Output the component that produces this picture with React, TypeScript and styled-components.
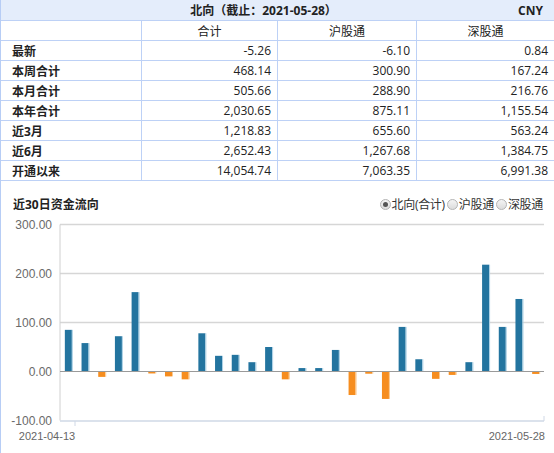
import React from "react";
import styled, { createGlobalStyle } from "styled-components";

const GlobalStyle = createGlobalStyle`
  html, body { margin: 0; padding: 0; background: #fff; }
  body { font-family: "Open Sans", "Noto Sans CJK SC", sans-serif; color: #333; }
`;

const Wrapper = styled.div`
  width: 554px;
  height: 453px;
  box-sizing: border-box;
  border-left: 1px solid #b7cdf5;
  overflow: hidden;
  background: #fff;
`;

const TitleRow = styled.div`
  display: grid;
  grid-template-columns: 1fr auto;
  align-items: center;
  height: 21px;
  box-sizing: border-box;
  background: #e4edfb;
  border-bottom: 1px solid #bdd1f6;
  padding: 0 11px 0 8px;
  font-size: 12px;
  font-weight: 700;
  color: #222;
`;

const TitleText = styled.span`
  text-align: center;
`;

const Row = styled.div`
  display: grid;
  grid-template-columns: 141px 136px 139px 1fr;
  height: 20px;
  box-sizing: border-box;
  border-bottom: 1px solid #bdd1f6;
`;

const Cell = styled.div<{ $align: "left" | "right" | "center"; $bold?: boolean; $last?: boolean }>`
  display: flex;
  align-items: center;
  justify-content: ${(p) => (p.$align === "left" ? "flex-start" : p.$align === "right" ? "flex-end" : "center")};
  padding: ${(p) => (p.$align === "left" ? "0 0 0 11px" : p.$align === "right" ? "0 6px 0 0" : "0")};
  border-right: ${(p) => (p.$last ? "none" : "1px solid #bdd1f6")};
  font-size: 12px;
  font-weight: ${(p) => (p.$bold ? 700 : 400)};
  color: #222;
  white-space: nowrap;
`;

const ChartSection = styled.section`
  display: flex;
  flex-direction: column;
`;

const ChartHeader = styled.div`
  display: flex;
  align-items: center;
  justify-content: space-between;
  height: 16px;
  padding: 15px 11px 1px 12px;
`;

const ChartTitle = styled.span`
  font-size: 12px;
  font-weight: 700;
  color: #222;
`;

const RadioGroup = styled.div`
  display: flex;
  align-items: center;
`;

const RadioLabel = styled.label`
  display: flex;
  align-items: center;
  font-size: 12px;
  color: #333;
  letter-spacing: -0.3px;
`;

const RadioDot = styled.span<{ $checked?: boolean }>`
  position: relative;
  width: 11px;
  height: 11px;
  box-sizing: border-box;
  border-radius: 50%;
  border: 1px solid #b4b4b4;
  background: linear-gradient(#f4f4f4, #dcdcdc);
  margin: 0 1px 0 2px;
  &::after {
    content: "";
    display: ${(p) => (p.$checked ? "block" : "none")};
    position: absolute;
    left: 2px;
    top: 2px;
    width: 5px;
    height: 5px;
    border-radius: 50%;
    background: #555;
  }
`;

const ChartSvg = styled.svg`
  display: block;
  font-family: "Liberation Sans", "Open Sans", sans-serif;
`;

const columns = ["合计", "沪股通", "深股通"];
const rows: [string, string, string, string][] = [
  ["最新", "-5.26", "-6.10", "0.84"],
  ["本周合计", "468.14", "300.90", "167.24"],
  ["本月合计", "505.66", "288.90", "216.76"],
  ["本年合计", "2,030.65", "875.11", "1,155.54"],
  ["近3月", "1,218.83", "655.60", "563.24"],
  ["近6月", "2,652.43", "1,267.68", "1,384.75"],
  ["开通以来", "14,054.74", "7,063.35", "6,991.38"],
];

const values = [
  85, 58, -11, 72, 162, -4, -10, -16, 78, 32, 34, 19, 50, -16, 7, 7, 44, -48, -4.5, -56,
  91, 25, -15, -7, 19, 218, 91, 148, -5,
];

const OX = -1; // svg left offset vs page
const OY = 213; // svg top on page
const plotL = 60 + OX;
const plotR = 544 + OX;
const zeroY = 371.5 - OY;
const pxPer = 0.49;

const Chart: React.FC = () => {
  const slot = (plotR - plotL) / values.length;
  const yTicks = [300, 200, 100, 0, -100];
  return (
    <ChartSvg width={553} height={240} viewBox="0 0 553 240">
      {yTicks.map((t) => {
        const y = zeroY - t * pxPer;
        return (
          <g key={t}>
            {t > 0 && <line x1={plotL} x2={plotR} y1={y} y2={y} stroke="#d6d6d6" strokeWidth={1.5} />}
            <text x={52 + OX} y={y + 4} textAnchor="end" fontSize={12} fill="#6a6a6a">
              {t.toFixed(2)}
            </text>
          </g>
        );
      })}
      <line x1={plotL} x2={plotL} y1={zeroY - 300 * pxPer} y2={zeroY + 100 * pxPer} stroke="#d0d0d0" strokeWidth={1} />
      {values.map((v, i) => {
        const cx = plotL + (i + 0.5) * slot;
        const h = Math.abs(v) * pxPer;
        const y = v >= 0 ? zeroY - h : zeroY;
        const pos = v >= 0;
        return (
          <g key={i}>
            <rect x={cx - 3.5} y={y} width={7} height={h} fill={pos ? "#23749f" : "#f68d1f"} />
            <rect x={cx + 3.5} y={y} width={1} height={h} fill={pos ? "#a9cfe4" : "#fbc98f"} />
          </g>
        );
      })}
      <line x1={plotL} x2={plotR} y1={zeroY} y2={zeroY} stroke="#9a9a9a" strokeWidth={1.2} />
      <line x1={plotL} x2={plotR} y1={421 - OY} y2={421 - OY} stroke="#cfd8e6" strokeWidth={1.5} />
      <line x1={75 + OX} x2={75 + OX} y1={421 - OY} y2={426 - OY} stroke="#cfd8e6" strokeWidth={1} />
      <line x1={plotR} x2={plotR} y1={416 - OY} y2={421 - OY} stroke="#cfd8e6" strokeWidth={1} />
      <text x={47 + OX} y={440 - OY} textAnchor="middle" fontSize={11} fill="#666">
        2021-04-13
      </text>
      <text x={545 + OX} y={440 - OY} textAnchor="end" fontSize={11} fill="#666">
        2021-05-28
      </text>
    </ChartSvg>
  );
};

const App: React.FC = () => (
  <>
    <GlobalStyle />
    <Wrapper>
      <TitleRow>
        <TitleText>北向（截止：2021-05-28）</TitleText>
        <span>CNY</span>
      </TitleRow>
      <Row>
        <Cell $align="left" />
        {columns.map((c, i) => (
          <Cell key={c} $align="center" $last={i === columns.length - 1}>
            {c}
          </Cell>
        ))}
      </Row>
      {rows.map((r) => (
        <Row key={r[0]}>
          <Cell $align="left" $bold>
            {r[0]}
          </Cell>
          <Cell $align="right">{r[1]}</Cell>
          <Cell $align="right">{r[2]}</Cell>
          <Cell $align="right" $last>
            {r[3]}
          </Cell>
        </Row>
      ))}
      <ChartSection>
        <ChartHeader>
          <ChartTitle>近30日资金流向</ChartTitle>
          <RadioGroup>
            <RadioLabel>
              <RadioDot $checked />
              北向(合计)
            </RadioLabel>
            <RadioLabel>
              <RadioDot />
              沪股通
            </RadioLabel>
            <RadioLabel>
              <RadioDot />
              深股通
            </RadioLabel>
          </RadioGroup>
        </ChartHeader>
        <Chart />
      </ChartSection>
    </Wrapper>
  </>
);

export default App;
